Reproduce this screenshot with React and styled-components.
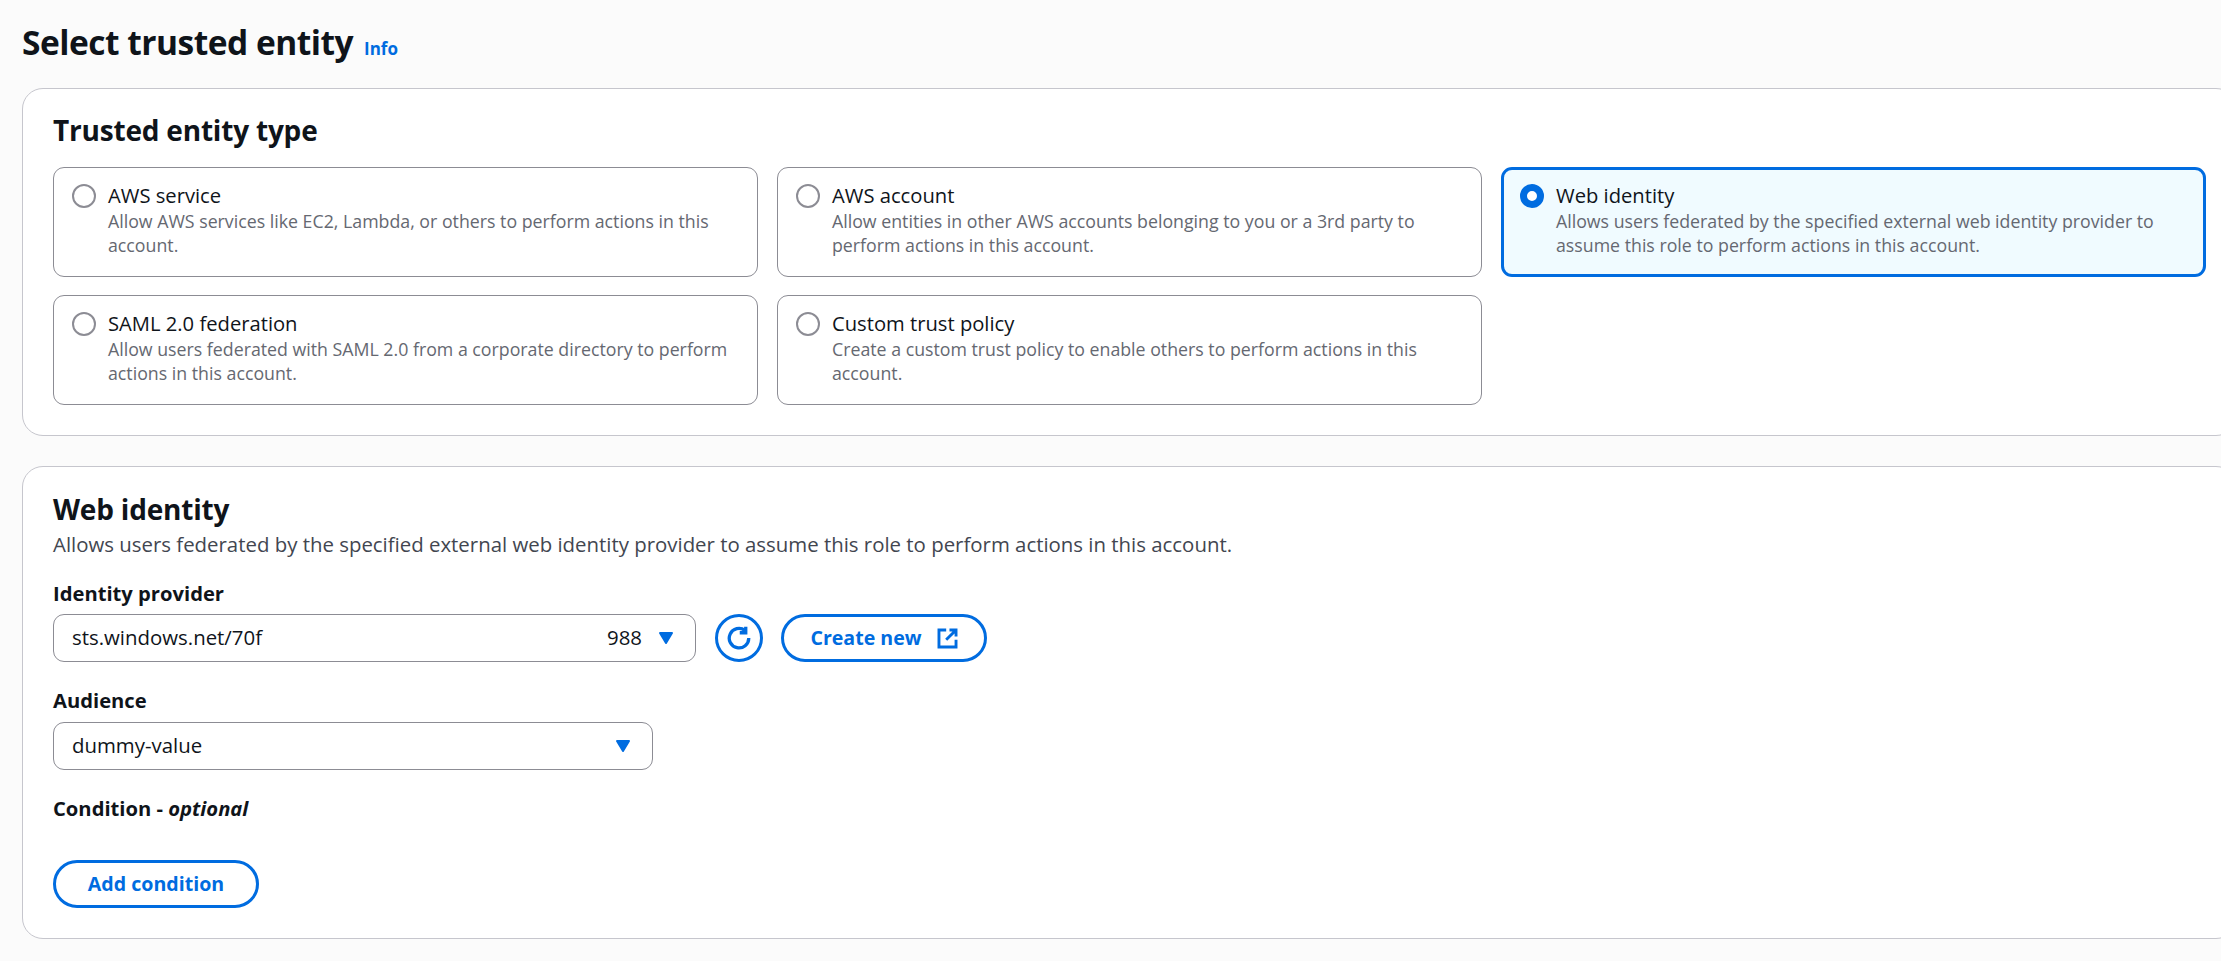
import React from 'react';
import styled, { createGlobalStyle } from 'styled-components';

const GlobalStyle = createGlobalStyle`
  html, body {
    margin: 0;
    padding: 0;
    height: 961px;
    overflow: hidden;
    background: #fbfbfb;
    color: #0f141a;
    font-family: "Open Sans", "Liberation Sans", sans-serif;
  }
`;

const Page = styled.div`
  width: 2215px;
  padding: 22px 0 0 22px;
  box-sizing: content-box;
`;

const Header = styled.div`
  display: flex;
  align-items: baseline;
  gap: 11px;
  height: 66px;
`;

const PageTitle = styled.h1`
  margin: 0;
  font-size: 33.5px;
  line-height: 40px;
  font-weight: 700;
  letter-spacing: -0.5px;
`;

const InfoLink = styled.a`
  color: #006ce0;
  font-size: 17px;
  font-weight: 700;
`;

const Panel = styled.section`
  box-sizing: border-box;
  background: #fff;
  border: 1px solid #c6c6cd;
  border-radius: 21px;
  padding: ${p => p.$top}px 30px 0;
  height: ${p => p.$height}px;
  margin-bottom: ${p => p.$gap || 0}px;
`;

const PanelTitle = styled.h2`
  margin: 0;
  font-size: 28px;
  line-height: 32px;
  font-weight: 700;
  letter-spacing: -0.2px;
`;

const PanelDesc = styled.p`
  margin: 7px 0 0;
  font-size: 20.4px;
  line-height: 24px;
  color: #424650;
`;

const CardGrid = styled.div`
  display: grid;
  grid-template-columns: repeat(3, 705px);
  grid-auto-rows: 110px;
  gap: 18px 19px;
  margin-top: 21px;
`;

const Card = styled.div`
  box-sizing: border-box;
  display: flex;
  gap: 12px;
  padding: ${p => (p.$selected ? '11.5px 16px' : '13.5px 18px')};
  border-radius: 11px;
  border: ${p => (p.$selected ? '3px solid #006ce0' : '1px solid #8c8c94')};
  background: ${p => (p.$selected ? '#f0fbff' : '#fff')};
`;

const Radio = styled.span`
  flex: none;
  box-sizing: border-box;
  width: 24px;
  height: 24px;
  border-radius: 50%;
  border: ${p => (p.$checked ? '7.5px solid #006ce0' : '2px solid #8c8c94')};
  background: #fff;
  margin-top: 2.5px;
`;

const CardTitle = styled.div`
  font-size: 20.2px;
  line-height: 27px;
  color: #0f141a;
`;

const CardDesc = styled.div`
  font-size: 17.75px;
  line-height: 24px;
  color: #656871;
`;

const Field = styled.div`
  margin-top: ${p => p.$top}px;
`;

const Label = styled.label`
  display: block;
  font-size: 20.2px;
  line-height: 24px;
  font-weight: 700;

  em {
    font-style: italic;
  }
`;

const ControlRow = styled.div`
  display: flex;
  gap: 18.5px;
  margin-top: ${p => p.$top}px;
`;

const Select = styled.div`
  box-sizing: border-box;
  display: flex;
  align-items: center;
  width: ${p => p.$width}px;
  height: 48px;
  padding: 0 21px 0 18px;
  border: 1px solid #8c8c94;
  border-radius: 11px;
  background: #fff;
  font-size: 20.4px;
`;

const SelectValue = styled.span`
  flex: 1;
  padding-bottom: 2px;
`;

const SelectExtra = styled.span`
  margin-right: 16px;
  padding-bottom: 2px;
`;

const Caret = styled.svg`
  width: 16px;
  height: 14px;
  flex: none;
  fill: #006ce0;
  stroke: #006ce0;
  stroke-width: 2;
  stroke-linejoin: round;
`;

const Button = styled.button`
  box-sizing: border-box;
  display: inline-flex;
  align-items: center;
  justify-content: center;
  gap: 15px;
  height: 48px;
  width: ${p => p.$width}px;
  border: 3px solid #006ce0;
  border-radius: 24px;
  background: #fff;
  color: #006ce0;
  font-family: inherit;
  font-size: 19.6px;
  font-weight: 700;
  padding: 0;
`;

const ButtonText = styled.span`
  padding-bottom: 2px;
`;

const ButtonIcon = styled.svg`
  width: ${p => p.$size}px;
  height: ${p => p.$size}px;
  flex: none;
  fill: none;
  stroke: #006ce0;
  stroke-width: 2.2;
`;

const CaretIcon = () => (
  <Caret viewBox="0 0 16 14">
    <path d="M2 2h12l-6 10z" />
  </Caret>
);

const cards = [
  { title: 'AWS service', desc: 'Allow AWS services like EC2, Lambda, or others to perform actions in this account.' },
  { title: 'AWS account', desc: 'Allow entities in other AWS accounts belonging to you or a 3rd party to perform actions in this account.' },
  { title: 'Web identity', desc: 'Allows users federated by the specified external web identity provider to assume this role to perform actions in this account.', selected: true },
  { title: 'SAML 2.0 federation', desc: 'Allow users federated with SAML 2.0 from a corporate directory to perform actions in this account.' },
  { title: 'Custom trust policy', desc: 'Create a custom trust policy to enable others to perform actions in this account.' },
];

const App = () => (
  <>
    <GlobalStyle />
    <Page>
      <Header>
        <PageTitle>Select trusted entity</PageTitle>
        <InfoLink>Info</InfoLink>
      </Header>
      <Panel $top={25} $height={348} $gap={30}>
        <PanelTitle>Trusted entity type</PanelTitle>
        <CardGrid>
          {cards.map(c => (
            <Card key={c.title} $selected={c.selected}>
              <Radio $checked={c.selected} />
              <div>
                <CardTitle>{c.title}</CardTitle>
                <CardDesc>{c.desc}</CardDesc>
              </div>
            </Card>
          ))}
        </CardGrid>
      </Panel>
      <Panel $top={26} $height={473}>
        <PanelTitle>Web identity</PanelTitle>
        <PanelDesc>Allows users federated by the specified external web identity provider to assume this role to perform actions in this account.</PanelDesc>
        <Field $top={25}>
          <Label>Identity provider</Label>
          <ControlRow $top={9}>
            <Select $width={643}>
              <SelectValue>sts.windows.net/70f</SelectValue>
              <SelectExtra>988</SelectExtra>
              <CaretIcon />
            </Select>
            <Button $width={48}>
              <ButtonIcon $size={24} viewBox="0 0 16 16">
                <path d="M14.5 8A6.5 6.5 0 1 1 12 3" />
                <path d="M12.5 0.5v4h-4" />
              </ButtonIcon>
            </Button>
            <Button $width={206}>
              <ButtonText>Create new</ButtonText>
              <ButtonIcon $size={21} viewBox="0 0 16 16">
                <path d="M7 1.5H1.5v13h13V9" />
                <path d="M9.5 1.5h5v5M14.5 1.5L7 9" />
              </ButtonIcon>
            </Button>
          </ControlRow>
        </Field>
        <Field $top={26}>
          <Label>Audience</Label>
          <ControlRow $top={10}>
            <Select $width={600}>
              <SelectValue>dummy-value</SelectValue>
              <CaretIcon />
            </Select>
          </ControlRow>
        </Field>
        <Field $top={26}>
          <Label>Condition - <em>optional</em></Label>
        </Field>
        <Field $top={40}>
          <Button $width={206}>
            <ButtonText>Add condition</ButtonText>
          </Button>
        </Field>
      </Panel>
    </Page>
  </>
);

export default App;
